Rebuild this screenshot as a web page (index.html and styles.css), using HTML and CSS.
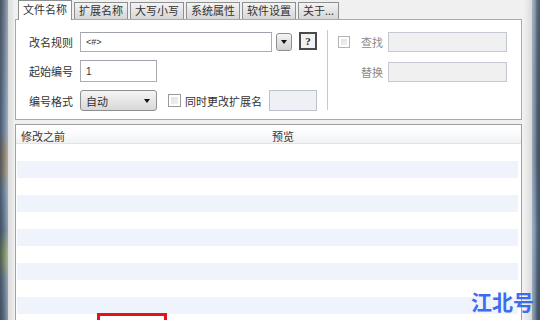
FILE: index.html
```html
<!DOCTYPE html>
<html lang="zh-CN">
<head>
<meta charset="utf-8">
<title>文件改名</title>
<link rel="stylesheet" href="styles.css">
</head>
<body>
<div class="screen">
  <div class="frame-left"></div>
  <div class="gutter-left"></div>
  <div class="window">
    <div class="tabs">
      <div class="tab active">文件名称</div>
      <div class="tab">扩展名称</div>
      <div class="tab">大写小写</div>
      <div class="tab">系统属性</div>
      <div class="tab">软件设置</div>
      <div class="tab">关于...</div>
    </div>
    <div class="panel">
      <div class="left">
        <div class="row r1">
          <span class="label">改名规则</span>
          <div class="input rule">&lt;#&gt;</div>
          <div class="dd"><span class="tri"></span></div>
          <div class="help">?</div>
        </div>
        <div class="row r2">
          <span class="label">起始编号</span>
          <div class="input start">1</div>
        </div>
        <div class="row r3">
          <span class="label">编号格式</span>
          <div class="select"><span>自动</span><span class="tri"></span></div>
          <span class="check"></span>
          <span class="label wide">同时更改扩展名</span>
          <div class="input ext"></div>
        </div>
      </div>
      <div class="sep"></div>
      <div class="right">
        <div class="row r1">
          <span class="check dim"></span>
          <span class="label dimtext">查找</span>
          <div class="input find"></div>
        </div>
        <div class="row r2b">
          <span class="check-space"></span>
          <span class="label dimtext">替换</span>
          <div class="input find"></div>
        </div>
      </div>
    </div>
    <div class="list">
      <div class="list-head">
        <span class="col1">修改之前</span>
        <span class="col2">预览</span>
      </div>
      <div class="list-body">
        <div class="lrow"></div>
        <div class="lrow alt"></div>
        <div class="lrow"></div>
        <div class="lrow alt"></div>
        <div class="lrow"></div>
        <div class="lrow alt"></div>
        <div class="lrow"></div>
        <div class="lrow alt"></div>
        <div class="lrow"></div>
        <div class="lrow alt"></div>
        <div class="lrow"></div>
      </div>
    </div>
  </div>
  <div class="gutter-right"></div>
  <div class="frame-right"></div>
</div>
<div class="redbox"></div>
<div class="watermark">江北号</div>
</body>
</html>
```

FILE: styles.css
```css
* { box-sizing: border-box; }
html, body {
  margin: 0;
  padding: 0;
  width: 540px;
  height: 320px;
  overflow: hidden;
  background: #f0f0f0;
  font-family: "Noto Sans CJK SC", "Liberation Sans", sans-serif;
  font-size: 11px;
  color: #333;
}
.screen {
  display: flex;
  width: 540px;
  height: 320px;
}
.frame-left {
  width: 8px;
  background:
    linear-gradient(90deg, rgba(40,50,65,0.55) 0, rgba(40,50,65,0.2) 3px, rgba(255,255,255,0.15) 6px, rgba(255,255,255,0.35) 8px),
    linear-gradient(180deg, #6a7a8c 0, #6f8196 60px, #7088a3 130px, #8a7f70 150px, #8e8272 170px, #6f86a0 190px, #60758c 230px, #7d8f62 250px, #7f9066 262px, #667b92 280px, #5b6d82 320px);
}
.gutter-left {
  width: 7px;
  background: linear-gradient(90deg, #dcdcdc 0, #e8e8e8 5px, #f6f6f6 7px);
}
.window {
  width: 507px;
  height: 320px;
  display: flex;
  flex-direction: column;
}
.gutter-right {
  width: 10px;
  background: linear-gradient(90deg, #f4f4f4 0, #e6e6e6 6px, #d8d8d8 10px);
}
.frame-right {
  width: 8px;
  background:
    linear-gradient(90deg, rgba(255,255,255,0.35) 0, rgba(255,255,255,0.1) 3px, rgba(30,40,55,0.35) 5px, rgba(30,40,55,0.55) 8px),
    linear-gradient(180deg, #7d8ea2 0, #6e8097 80px, #667a91 160px, #738aa4 230px, #62768d 320px);
}

/* Tabs */
.tabs {
  flex-shrink: 0;
  height: 19px;
  display: flex;
  align-items: flex-end;
  padding-left: 3px;
  gap: 2px;
}
.tab {
  height: 17px;
  padding: 0 4px;
  line-height: 15px;
  border: 1px solid #8e8f8f;
  border-bottom: none;
  background: linear-gradient(180deg, #f4f4f4 0, #e4e4e4 50%, #d6d6d6 100%);
  white-space: nowrap;
}
.tab.active {
  height: 20px;
  margin-bottom: -1px;
  line-height: 17px;
  background: #fff;
  position: relative;
  z-index: 1;
}

/* Top panel */
.panel {
  flex-shrink: 0;
  height: 101px;
  border: 1px solid #a9a9a9;
  background: #fff;
  display: flex;
}
.left {
  width: 311px;
  padding: 12px 0 0 13px;
  display: flex;
  flex-direction: column;
  gap: 8px;
}
.row {
  display: flex;
  align-items: center;
}
.r1 { height: 20px; }
.r2 { height: 22px; }
.r3 { height: 21px; }
.r2b { height: 20px; margin-top: 10px; }
.label {
  width: 46px;
  margin-right: 5px;
  white-space: nowrap;
  line-height: 14px;
}
.label.wide { width: auto; margin-right: 7px; }
.input {
  border: 1px solid #abadb3;
  border-top-color: #9ea2ab;
  background: #fff;
  font-family: "Liberation Sans", sans-serif;
  font-size: 9px;
  padding-left: 5px;
  display: flex;
  align-items: center;
  height: 100%;
}
.rule { width: 192px; }
.start { width: 77px; font-size: 10px; }
.ext {
  width: 48px;
  background: #eef0f5;
  border-color: #bcc2cd;
}
.dd {
  width: 16px;
  height: 18px;
  margin-left: 4px;
  border: 1px solid #8f8f8f;
  border-radius: 3px;
  background: linear-gradient(180deg, #f6f6f6 0, #e2e2e2 50%, #d2d2d2 100%);
  display: flex;
  align-items: center;
  justify-content: center;
}
.tri {
  width: 0;
  height: 0;
  border-left: 3px solid transparent;
  border-right: 3px solid transparent;
  border-top: 4px solid #111;
}
.help {
  width: 18px;
  height: 18px;
  margin-left: 7px;
  margin-top: -2px;
  border: 2px solid #4a4a4a;
  background: #f2f2f2;
  font-family: "Liberation Serif", serif;
  font-weight: bold;
  font-size: 11px;
  line-height: 14px;
  text-align: center;
  color: #222;
}
.select {
  width: 77px;
  height: 100%;
  border: 1px solid #8f8f8f;
  border-radius: 3px;
  background: linear-gradient(180deg, #f5f5f5 0, #e6e6e6 50%, #d8d8d8 100%);
  display: flex;
  align-items: center;
  justify-content: space-between;
  padding: 0 6px 0 5px;
  margin-right: 11px;
}
.check {
  width: 13px;
  height: 13px;
  border: 1px solid #9a9a9a;
  background: linear-gradient(135deg, #dedede 0, #f4f4f4 100%);
  box-shadow: inset 0 0 0 2px #fff;
  margin-right: 4px;
}
.check.dim {
  width: 12px;
  height: 12px;
  border-color: #b4b4b4;
  margin-right: 11px;
}
.check-space {
  width: 12px;
  margin-right: 11px;
}
.dimtext {
  width: 23px;
  margin-right: 4px;
  color: #8a8a8a;
}
.sep {
  width: 1px;
  height: 80px;
  margin-top: 10px;
  background: #c9c9c9;
}
.right {
  padding: 12px 0 0 10px;
  display: flex;
  flex-direction: column;
}
.find {
  width: 119px;
  background: #f0f0f0;
  border-color: #c3c8d2;
}

/* List */
.list {
  flex: 1;
  min-height: 0;
  overflow: hidden;
  margin-top: 4px;
  border: 1px solid #a0a0a0;
  border-bottom: none;
  background: #fff;
  display: flex;
  flex-direction: column;
}
.list-head {
  flex-shrink: 0;
  height: 19px;
  border-bottom: 1px solid #e2e4e8;
  background: linear-gradient(180deg, #ffffff 0, #fafbfc 50%, #f1f2f4 100%);
  display: flex;
  align-items: center;
  padding-top: 3px;
}
.col1 { width: 256px; padding-left: 5px; }
.col2 { padding-left: 0; }
.list-body {
  flex-shrink: 0;
  padding: 0 3px 0 1px;
}
.lrow { height: 17px; background: #fff; }
.lrow.alt { background: #eef3fc; }

/* Overlays */
.redbox {
  position: absolute;
  left: 97px;
  top: 313px;
  width: 70px;
  height: 20px;
  border: 3px solid #e3121b;
}
.watermark {
  position: absolute;
  left: 471px;
  top: 287px;
  font-family: "Noto Sans CJK SC", sans-serif;
  font-weight: bold;
  font-size: 21px;
  line-height: 28px;
  color: #3b6cf0;
  white-space: nowrap;
}
```
